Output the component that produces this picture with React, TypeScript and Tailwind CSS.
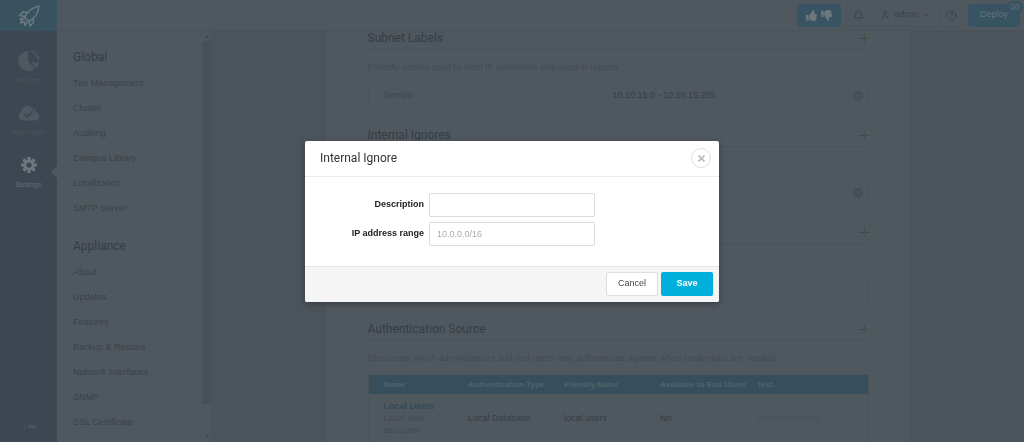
import { FaThumbsUp, FaThumbsDown, FaChevronLeft } from 'react-icons/fa'
import { Bell, CircleHelp, User } from 'lucide-react'
import type { ReactNode } from 'react'

const globalLinks = ['Tier Management', 'Cluster', 'Auditing', 'Campus Library', 'Localization', 'SMTP Server']
const applianceLinks = ['About', 'Updates', 'Features', 'Backup & Restore', 'Network Interfaces', 'SNMP', 'SSL Certificate']

const RocketIcon = () => (
  <svg width="22" height="22" viewBox="0 0 22 22" fill="none" stroke="currentColor" strokeWidth="1.5" strokeLinejoin="round" strokeLinecap="round">
    <path d="M21 1C14.500 2.500 9.500 6 6.500 12.500L11 16.500C17 13 20.500 8 21 1z" />
    <path d="M9.500 7.500L5 7 1.500 10.500l5.500 1M15 13l.5 4.500-3.500 3.500-1-4.500M5.500 13.500L2 14l2.500 1.500L2.500 18l4-1 .5 3.500 2-3.500" />
  </svg>
)

const PieIcon = () => (
  <svg width="22" height="22" viewBox="0 0 22 22">
    <path d="M10 1v10.500l7 7A10 10 0 1 1 10 1z" fill="currentColor" />
    <path d="M13 12.500h8a9 9 0 0 1-2.500 5.500z" fill="currentColor" />
    <path d="M12.500 1.500a8.500 8.500 0 0 1 8 8.500" fill="none" stroke="currentColor" strokeWidth="1.500" />
  </svg>
)

const CloudIcon = () => (
  <svg width="22" height="16" viewBox="0 0 22 16">
    <path d="M5 15.500a4.700 4.700 0 0 1-1.500-9A6 6 0 0 1 14.500 3.800 4 4 0 0 1 18 7.200a4.200 4.200 0 0 1-.5 8.300z" fill="currentColor" />
    <path d="M6.500 9l3 3 5.500-6" fill="none" stroke="#3e4751" strokeWidth="1.800" />
  </svg>
)

const GearIcon = () => (
  <svg width="16" height="16" viewBox="0 0 16 16">
    <g stroke="currentColor" strokeWidth="3.200">
      <path d="M8 0v16M0 8h16M2.400 2.400l11.200 11.200M13.600 2.400L2.400 13.600" />
    </g>
    <circle cx="8" cy="8" r="5.800" fill="currentColor" />
    <circle cx="8" cy="8" r="2.600" fill="#3e4751" />
  </svg>
)

const RemoveIcon = () => (
  <svg width="10" height="10" viewBox="0 0 10 10">
    <circle cx="5" cy="5" r="5" fill="#464e56" />
    <path d="M3.500 3.500l3 3M6.500 3.500l-3 3" stroke="#50585f" strokeWidth="1.200" />
  </svg>
)

const PlusIcon = () => (
  <svg width="10" height="10" viewBox="0 0 10 10">
    <path d="M0 5.500h10" stroke="#414d42" />
    <path d="M5.500 0v10" stroke="#434f4a" />
  </svg>
)

const RailItem = ({ icon, label, active }: { icon: ReactNode; label: string; active?: boolean }) => (
  <a
    href="#"
    className={
      active
        ? 'relative flex h-[52px] w-full flex-col items-center gap-1 text-[#6f767d]'
        : 'flex h-[52px] w-full flex-col items-center gap-1 text-[#4f5861]'
    }
  >
    <span className="flex h-[22px] items-center">{icon}</span>
    <span className={active ? 'text-[7px] leading-[10px] text-[#656d74]' : 'text-[7px] leading-[10px] text-[#4a535c]'}>{label}</span>
    {active && (
      <span className="absolute top-3 right-0 border-y-[6px] border-r-[6px] border-y-transparent border-r-[#50585f]" />
    )}
  </a>
)

const Menu = ({ title, links }: { title: string; links: string[] }) => (
  <section>
    <h2 className="mr-6 flex h-[26px] items-center border-b border-[#4b535b] font-[Roboto] text-xs text-[#353d45]">{title}</h2>
    <ul className="pt-px">
      {links.map((link) => (
        <li key={link}>
          <a href="#" className="block leading-[25px]">
            {link}
          </a>
        </li>
      ))}
    </ul>
  </section>
)

const SectionHeader = ({ title }: { title?: string }) => (
  <div className="flex h-[23px] items-center justify-between border-b border-[#495159]">
    <h2 className="font-[Roboto] text-xs text-[#353d45]">{title}</h2>
    <button type="button" aria-label="Add">
      <PlusIcon />
    </button>
  </div>
)

type SectionProps = { title?: string; hint?: string; name?: string; value?: string; removable?: boolean }

const Section = ({ title, hint, name, value, removable }: SectionProps) => (
  <section className="h-[97px]">
    <SectionHeader title={title} />
    <p className="mt-[9px] h-4 leading-4 text-[#424b54]">{hint}</p>
    <div className="mt-2 flex h-[26px] items-center border border-[#4b535b] px-[15px]">
      <a href="#" className="w-[229px] text-[#364a58]">
        {name}
      </a>
      <span className="grow text-[#353d45]">{value}</span>
      {removable && (
        <button type="button" aria-label="Remove" className="-mr-[10px]">
          <RemoveIcon />
        </button>
      )}
    </div>
  </section>
)

const Header = () => (
  <header className="flex h-[31px] shrink-0 items-center justify-end border-b border-[#4a525a] pr-1">
    <button type="button" aria-label="Feedback" className="mr-[5px] flex h-[23px] w-11 items-center justify-center gap-1 rounded-sm bg-[#385362] text-[#6c777e]">
      <FaThumbsUp size={11} />
      <FaThumbsDown size={11} />
    </button>
    <div className="mr-[5px] flex h-[23px] items-center divide-x divide-[#4b535b] rounded-sm border border-[#4b535b]">
      <button type="button" aria-label="Notifications" className="flex h-full w-[23px] items-center justify-center">
        <Bell size={11} />
      </button>
      <button type="button" className="flex h-full w-[70px] items-center justify-center gap-1">
        <User size={10} />
        admin
        <span className="border-x-[3px] border-t-[3px] border-x-transparent border-t-[#454d54]" />
      </button>
      <button type="button" aria-label="Help" className="flex h-full w-[22px] items-center justify-center">
        <CircleHelp size={11} />
      </button>
    </div>
    <button type="button" className="relative h-[23px] w-[52px] rounded-sm bg-[#385362] text-[#65727b]">
      Deploy
      <span className="absolute -top-[3px] -right-[3px] h-3 w-4 rounded-full border border-[#34505f] bg-[#3c5665] text-[7px] leading-[10px]">10</span>
    </button>
  </header>
)

const AuthTable = () => (
  <table className="w-full table-fixed border-x border-[#4b535b] text-left">
    <colgroup>
      <col className="w-[100px]" />
      <col className="w-[96px]" />
      <col className="w-[96px]" />
      <col className="w-[97px]" />
      <col />
    </colgroup>
    <thead className="bg-[#374f5d] text-[8px] text-[#4f636f]">
      <tr className="h-[19px]">
        <th className="pl-[15px]">Name</th>
        <th>Authentication Type</th>
        <th>Friendly Name</th>
        <th className="whitespace-nowrap">Available to End Users</th>
        <th>Test</th>
      </tr>
    </thead>
    <tbody className="text-[#353d45]">
      <tr className="h-12 leading-3">
        <td className="pr-6 pl-[15px]">
          <a href="#" className="font-bold text-[#324a59]">
            Local Users
          </a>
          <p className="text-[#424a53]">Local user accounts</p>
        </td>
        <td>Local Database</td>
        <td>local users</td>
        <td>No</td>
        <td className="text-[#485058]">Deploy Needed</td>
      </tr>
    </tbody>
  </table>
)

const IgnoreDialog = () => (
  <div className="fixed inset-0 flex items-center justify-center">
    <form role="dialog" aria-label="Internal Ignore" className="w-[414px] overflow-hidden rounded-xs bg-white shadow-[0_2px_6px_rgba(0,0,0,0.3)]">
      <div className="flex h-9 items-center justify-between border-b border-[#ececec] pr-2 pl-[15px]">
        <h1 className="font-[Roboto] text-xs text-[#333]">Internal Ignore</h1>
        <button type="button" aria-label="Close" className="flex size-5 items-center justify-center rounded-full border border-[#dcdfe1] text-[#b5bcc2]">
          <svg width="7" height="7" viewBox="0 0 7 7" stroke="currentColor" strokeWidth="1.700">
            <path d="M.5.5l6 6M6.500.5l-6 6" />
          </svg>
        </button>
      </div>
      <div className="flex flex-col gap-[5px] pt-4 pb-5">
        <div className="flex items-center gap-[5px]">
          <label htmlFor="description" className="w-[119px] text-right font-bold text-[#222]">
            Description
          </label>
          <input id="description" className="h-6 w-[166px] rounded-xs border border-[#dcdcdc] px-[7px]" />
        </div>
        <div className="flex items-center gap-[5px]">
          <label htmlFor="range" className="w-[119px] text-right font-bold text-[#222]">
            IP address range
          </label>
          <input id="range" placeholder="10.0.0.0/16" className="h-6 w-[166px] rounded-xs border border-[#dcdcdc] px-[7px] placeholder:text-[#aaa]" />
        </div>
      </div>
      <div className="flex h-9 items-center justify-end gap-[3px] border-t border-[#e6e6e6] bg-[#f5f5f5] pr-[6px]">
        <button type="button" className="h-6 w-[52px] rounded-xs border border-[#dedede] bg-white text-[#444]">
          Cancel
        </button>
        <button type="submit" className="h-6 w-[52px] rounded-xs bg-[#00b0da] font-bold text-white">
          Save
        </button>
      </div>
    </form>
  </div>
)

export default function App() {
  return (
    <div className="flex h-screen overflow-hidden bg-[#50585f] font-['Liberation_Sans',Arial,sans-serif] text-[9px] text-[#3a424a]">
      <nav className="flex w-[57px] shrink-0 flex-col items-center bg-[#3e4751]">
        <a href="#" aria-label="Home" className="flex h-[31px] w-full items-center justify-center bg-[#38535f] text-[#6b7980]">
          <RocketIcon />
        </a>
        <div className="flex w-full grow flex-col pt-[19px]">
          <RailItem icon={<PieIcon />} label="Reports" />
          <RailItem icon={<CloudIcon />} label="Web Filter" />
          <RailItem icon={<GearIcon />} label="Settings" active />
        </div>
        <button type="button" aria-label="Collapse" className="flex h-8 items-center text-[#4a535c]">
          <FaChevronLeft size={7} />
          <span className="h-[3px] w-2 bg-[#4a535c]" />
        </button>
      </nav>
      <div className="flex min-w-0 grow flex-col">
        <Header />
        <div className="flex min-h-0 grow">
          <aside className="flex w-[154px] shrink-0 overflow-hidden pl-4">
            <div className="flex grow flex-col gap-3 pt-[13px]">
              <Menu title="Global" links={globalLinks} />
              <Menu title="Appliance" links={applianceLinks} />
            </div>
            <div className="flex w-[9px] shrink-0 flex-col items-center justify-between pt-1 pb-1">
              <span className="border-x-[2px] border-b-[3px] border-x-transparent border-b-[#40484f]" />
              <span className="my-[3px] w-[9px] grow bg-[#495158]" />
              <span className="mt-7 border-x-[2px] border-t-[3px] border-x-transparent border-t-[#40484f]" />
            </div>
          </aside>
          <main className="flex grow justify-center overflow-hidden bg-[#4c545b]">
            <div className="-mt-1 w-[584px] bg-[#50585f] pr-[41px] pl-[42px]">
              <Section
                title="Subnet Labels"
                hint="Friendly names used to label IP addresses displayed in reports."
                name="Sample"
                value="10.10.15.0 - 10.10.15.255"
                removable
              />
              <Section title="Internal Ignores" removable />
              <Section />
              <SectionHeader title="Authentication Source" />
              <p className="my-[9px] h-4 leading-4 text-[#424b54]">
                Directories which administrators and end users may authenticate against when credentials are needed.
              </p>
              <AuthTable />
            </div>
          </main>
        </div>
      </div>
      <IgnoreDialog />
    </div>
  )
}
